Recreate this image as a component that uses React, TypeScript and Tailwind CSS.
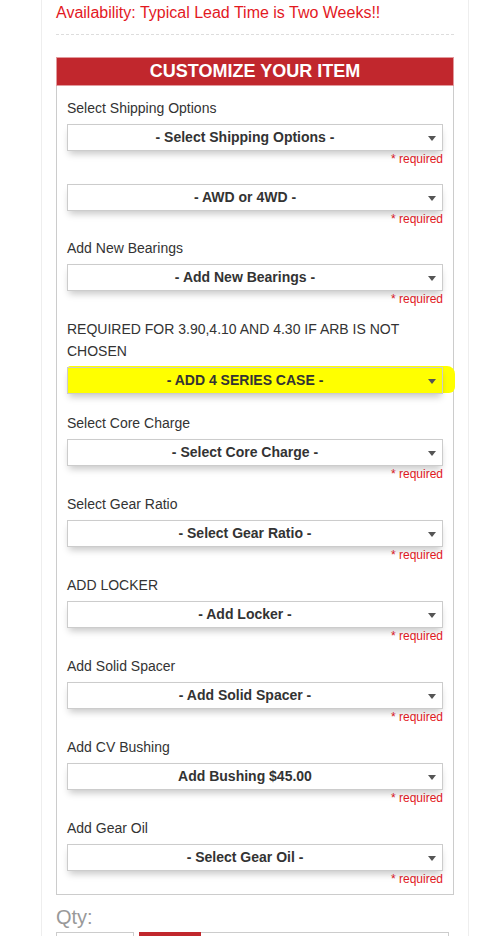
import React from 'react'

type Group = {
  label?: string
  value: string
  mt: string
  required?: boolean
  highlight?: boolean
}

const groups: Group[] = [
  { label: 'Select Shipping Options', value: '- Select Shipping Options -', mt: 'mt-0', required: true },
  { value: '- AWD or 4WD -', mt: 'mt-[16px]', required: true },
  { label: 'Add New Bearings', value: '- Add New Bearings -', mt: 'mt-[9px]', required: true },
  {
    label: 'REQUIRED FOR 3.90,4.10 AND 4.30 IF ARB IS NOT CHOSEN',
    value: '- ADD 4 SERIES CASE -',
    mt: 'mt-[10px]',
    highlight: true,
  },
  { label: 'Select Core Charge', value: '- Select Core Charge -', mt: 'mt-[18px]', required: true },
  { label: 'Select Gear Ratio', value: '- Select Gear Ratio -', mt: 'mt-[10px]', required: true },
  { label: 'ADD LOCKER', value: '- Add Locker -', mt: 'mt-[10px]', required: true },
  { label: 'Add Solid Spacer', value: '- Add Solid Spacer -', mt: 'mt-[10px]', required: true },
  { label: 'Add CV Bushing', value: 'Add Bushing $45.00', mt: 'mt-[10px]', required: true },
  { label: 'Add Gear Oil', value: '- Select Gear Oil -', mt: 'mt-[10px]', required: true },
]

function Caret() {
  return (
    <svg width="8" height="5" viewBox="0 0 8 5" className="absolute right-[6px] top-[11px]">
      <path d="M0 0h8L4 5z" fill="#555" />
    </svg>
  )
}

function OptionGroup({ g }: { g: Group }) {
  return (
    <div className={g.mt}>
      {g.label && (
        <div className="text-[14px] leading-[22px] text-[#333] mb-[5px] pr-[20px]">{g.label}</div>
      )}
      <div className="relative">
        {g.highlight && (
          // marker stroke drawn over the page
          <div className="absolute left-[1px] right-[-12px] top-[-1px] bottom-[1px] bg-[#ffff00] rounded-[2px_8px_6px_3px]" />
        )}
        <div
          className={
            'relative h-[27px] border border-[#ccc] flex items-center justify-center pr-[20px] text-[14px] font-bold text-[#333] shadow-[0_5px_7px_-2px_rgba(0,0,0,0.22)] ' +
            (g.highlight ? 'bg-[#ffff00]' : 'bg-white')
          }
        >
          {g.value}
          <Caret />
        </div>
      </div>
      {g.required && (
        <div className="text-right text-[12px] leading-[17px] text-[#e3191f]">* required</div>
      )}
    </div>
  )
}

export default function App() {
  return (
    <div className="w-[494px] h-[936px] overflow-hidden bg-white" style={{ fontFamily: '"Liberation Sans", Arial, sans-serif' }}>
      <div className="ml-[41px] w-[428px] h-full border-x border-[#eee] px-[14px]">
        <div className="text-[16px] leading-[26px] text-[#e3191f] pt-0">
          Availability: Typical Lead Time is Two Weeks!!
        </div>
        <div className="mt-[8px] border-t border-dashed border-[#ddd]" />

        <div className="mt-[22px] border border-[#ccc]">
          <div className="h-[29px] -mx-px -mt-px bg-[#c1272d] border border-[#e29a9d] flex items-center justify-center text-white font-bold text-[18px]">
            CUSTOMIZE YOUR ITEM
          </div>
          <div className="px-[10px] pt-[11px] pb-[6px]">
            {groups.map((g) => (
              <OptionGroup key={g.value} g={g} />
            ))}
          </div>
        </div>

        <div className="mt-[10px] text-[20px] leading-[24px] text-[#999]">Qty:</div>
        <div className="mt-[3px] flex gap-[5px]">
          <div className="w-[78px] h-[30px] border border-[#ccc]" />
          <div className="w-[310px] h-[30px] border border-[#ccc] flex">
            <div className="w-[62px] -mt-px -ml-px h-[31px] bg-[#c1272d]" />
          </div>
        </div>
      </div>
    </div>
  )
}
